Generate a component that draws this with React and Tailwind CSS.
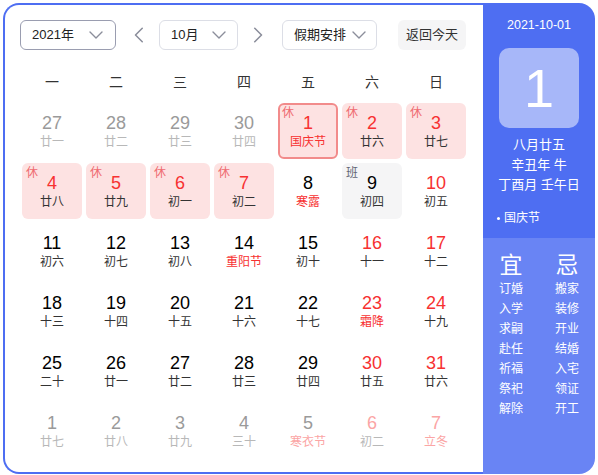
import React from "react";

const FONT = { fontFamily: '"Liberation Sans", "Noto Sans CJK SC", sans-serif' };

const WEEK = ["一", "二", "三", "四", "五", "六", "日"];

// o: other month, r: 休, w: 班, f: festival/solar term, s: selected
const DAYS = [
  [
    { d: 27, l: "廿一", o: 1 },
    { d: 28, l: "廿二", o: 1 },
    { d: 29, l: "廿三", o: 1 },
    { d: 30, l: "廿四", o: 1 },
    { d: 1, l: "国庆节", r: 1, f: 1, s: 1 },
    { d: 2, l: "廿六", r: 1 },
    { d: 3, l: "廿七", r: 1 },
  ],
  [
    { d: 4, l: "廿八", r: 1 },
    { d: 5, l: "廿九", r: 1 },
    { d: 6, l: "初一", r: 1 },
    { d: 7, l: "初二", r: 1 },
    { d: 8, l: "寒露", f: 1 },
    { d: 9, l: "初四", w: 1 },
    { d: 10, l: "初五" },
  ],
  [
    { d: 11, l: "初六" },
    { d: 12, l: "初七" },
    { d: 13, l: "初八" },
    { d: 14, l: "重阳节", f: 1 },
    { d: 15, l: "初十" },
    { d: 16, l: "十一" },
    { d: 17, l: "十二" },
  ],
  [
    { d: 18, l: "十三" },
    { d: 19, l: "十四" },
    { d: 20, l: "十五" },
    { d: 21, l: "十六" },
    { d: 22, l: "十七" },
    { d: 23, l: "霜降", f: 1 },
    { d: 24, l: "十九" },
  ],
  [
    { d: 25, l: "二十" },
    { d: 26, l: "廿一" },
    { d: 27, l: "廿二" },
    { d: 28, l: "廿三" },
    { d: 29, l: "廿四" },
    { d: 30, l: "廿五" },
    { d: 31, l: "廿六" },
  ],
  [
    { d: 1, l: "廿七", o: 1 },
    { d: 2, l: "廿八", o: 1 },
    { d: 3, l: "廿九", o: 1 },
    { d: 4, l: "三十", o: 1 },
    { d: 5, l: "寒衣节", f: 1, o: 1 },
    { d: 6, l: "初二", o: 1 },
    { d: 7, l: "立冬", f: 1, o: 1 },
  ],
];

const YI = ["订婚", "入学", "求嗣", "赴任", "祈福", "祭祀", "解除"];
const JI = ["搬家", "装修", "开业", "结婚", "入宅", "领证", "开工"];

function Chevron({ dir = "down", className = "" }) {
  const points = {
    down: "2,5 8,11 14,5",
    left: "10,2 4,8 10,14",
    right: "6,2 12,8 6,14",
  }[dir];
  return (
    <svg viewBox="0 0 16 16" className={className} fill="none" stroke="#8b8e9b" strokeWidth="1.4">
      <polyline points={points} strokeLinecap="round" strokeLinejoin="round" />
    </svg>
  );
}

function Select({ label, width, border, pr }) {
  return (
    <div
      className={`flex h-[30px] items-center justify-between rounded-[6px] border bg-white pl-[11px] text-[13px] text-[#222] ${width} ${border} ${pr}`}
    >
      <span>{label}</span>
      <Chevron className="h-[16px] w-[16px]" />
    </div>
  );
}

function DayCell({ day, col }) {
  const weekend = col >= 5;
  let num = "text-black";
  let lunar = "text-[#333]";
  if (day.o) {
    num = weekend ? "text-[#fba5a5]" : "text-[#9a9a9a]";
    lunar = day.f ? "text-[#fba5a5]" : "text-[#b8b8b8]";
  } else {
    if (day.r || (weekend && !day.w)) num = "text-[#f73131]";
    if (day.f) lunar = "text-[#f73131]";
  }
  let box = "border-transparent";
  if (day.r) box = day.s ? "border-[#f28b8b] bg-[#fde2e2]" : "border-transparent bg-[#fde2e2]";
  if (day.w) box = "border-transparent bg-[#f5f5f6]";

  return (
    <div className="h-[60px] p-[2px]">
      <div className={`relative flex h-full flex-col items-center rounded-[6px] border-2 pt-[7px] ${box}`}>
        {day.r && (
          <span className="absolute left-[2px] top-[1px] text-[12px] leading-[14px] text-[#ef6b70]">休</span>
        )}
        {day.w && (
          <span className="absolute left-[2px] top-[1px] text-[12px] leading-[14px] text-[#626675]">班</span>
        )}
        <span className={`text-[18px] leading-[22px] ${num}`}>{day.d}</span>
        <span className={`text-[12px] leading-[16px] ${lunar}`}>{day.l}</span>
      </div>
    </div>
  );
}

export default function App() {
  return (
    <div className="h-[475px] w-[598px] bg-white pl-[3px] pt-[3px]" style={FONT}>
      <div className="flex h-[471px] w-[592px]">
        {/* month grid */}
        <div className="w-[480px] rounded-l-[16px] border-y-2 border-l-2 border-[#4e6ef2] bg-white px-[15px] pt-[15px]">
          <div className="flex items-center">
            <Select label="2021年" width="w-[96px]" border="border-[#9a9db0]" pr="pr-[11px]" />
            <button className="ml-[15px] flex w-[18px] justify-center">
              <Chevron dir="left" className="h-[18px] w-[18px]" />
            </button>
            <div className="ml-[10px]">
              <Select label="10月" width="w-[79px]" border="border-[#dcdee6]" pr="pr-[10px]" />
            </div>
            <button className="ml-[10px] flex w-[18px] justify-center">
              <Chevron dir="right" className="h-[18px] w-[18px]" />
            </button>
            <div className="ml-[16px]">
              <Select label="假期安排" width="w-[95px]" border="border-[#dcdee6]" pr="pr-[9px]" />
            </div>
            <button className="ml-[21px] h-[30px] w-[68px] rounded-[6px] bg-[#f5f5f6] text-[13px] text-[#333]">
              返回今天
            </button>
          </div>

          <div className="mt-[14px] grid h-[36px] grid-cols-7 items-center text-center text-[14px] text-[#333]">
            {WEEK.map((w) => (
              <span key={w}>{w}</span>
            ))}
          </div>

          <div className="mt-px grid grid-cols-7">
            {DAYS.map((row, ri) =>
              row.map((day, ci) => <DayCell key={`${ri}-${ci}`} day={day} col={ci} />)
            )}
          </div>
        </div>

        {/* day detail */}
        <div className="flex w-[112px] flex-col overflow-hidden rounded-r-[16px] text-white">
          <div className="flex h-[235px] flex-col items-center bg-[#4e6ef2] pt-[12px]">
            <div className="text-[12.5px] leading-[20px]">2021-10-01</div>
            <div className="mt-[13px] flex h-[80px] w-[80px] items-center justify-center rounded-[10px] bg-white/50 text-[54px] font-light leading-none">
              1
            </div>
            <div className="mt-[7px] text-[13px] leading-[20px]">八月廿五</div>
            <div className="text-[13px] leading-[20px]">辛丑年 牛</div>
            <div className="text-[13px] leading-[20px]">丁酉月 壬午日</div>
            <div className="mt-[13px] flex w-full items-center pl-[14px] text-[12px] leading-[20px]">
              <span className="mr-[4px] h-[3px] w-[3px] rounded-full bg-white" />
              国庆节
            </div>
          </div>
          <div className="grid flex-1 grid-cols-2 bg-[#6984f4] pt-[13px]">
            <div className="flex flex-col items-center">
              <span className="text-[23px] leading-[28px]">宜</span>
              {YI.map((t) => (
                <span key={t} className="text-[12px] leading-[20px]">
                  {t}
                </span>
              ))}
            </div>
            <div className="flex flex-col items-center">
              <span className="text-[23px] leading-[28px]">忌</span>
              {JI.map((t) => (
                <span key={t} className="text-[12px] leading-[20px]">
                  {t}
                </span>
              ))}
            </div>
          </div>
        </div>
      </div>
    </div>
  );
}
